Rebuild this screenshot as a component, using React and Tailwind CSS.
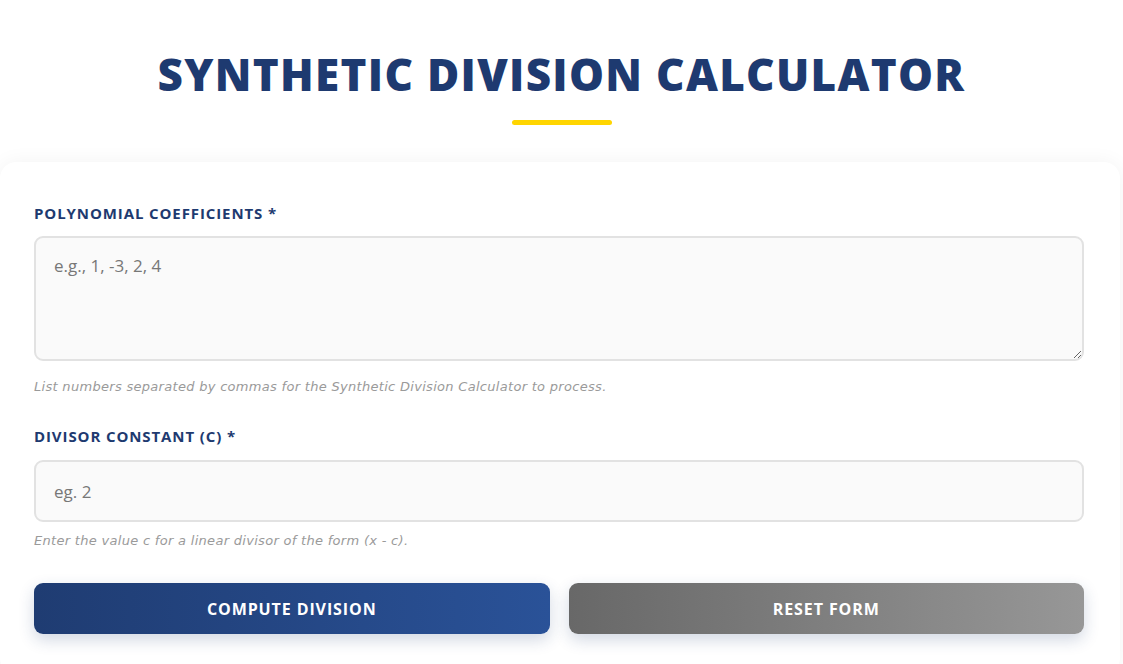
export default function App() {
  const font = { fontFamily: '"Open Sans", "Noto Sans", sans-serif' };
  const small = { fontFamily: '"DejaVu Sans", "Open Sans", sans-serif' };
  return (
    <div className="min-h-[664px] w-[1123px] bg-white overflow-hidden" style={font}>
      <div className="flex flex-col items-center pt-[44px]">
        <h1 className="text-[44px] leading-[60px] font-extrabold tracking-[1.3px] text-[#1e3a70] uppercase">
          Synthetic Division Calculator
        </h1>
        <div className="mt-[16px] h-[5px] w-[100px] rounded-full bg-[#ffd500]" />
      </div>
      <div className="mt-[37px] w-[1120px] rounded-[16px] bg-white pl-[34px] pr-[36px] pt-[40px] pb-[40px] shadow-[0_0_20px_rgba(0,0,0,0.05)]">
        <label className="block text-[15px] font-bold tracking-[0.9px] text-[#1e3a70] uppercase leading-[22px]">
          Polynomial Coefficients *
        </label>
        <textarea
          placeholder="e.g., 1, -3, 2, 4"
          className="mt-[12px] block h-[125px] w-full rounded-[9px] border-2 border-[#e2e2e2] bg-[#fafafa] px-[18px] pt-[15px] text-[17px] text-[#333] placeholder:text-[#777] outline-none"
          style={font}
        />
        <p className="mt-[17px] text-[13px] italic tracking-[0.3px] text-[#9a9a9a] leading-[18px]" style={small}>
          List numbers separated by commas for the Synthetic Division Calculator to process.
        </p>
        <label className="mt-[29px] block text-[15px] font-bold tracking-[0.9px] text-[#1e3a70] uppercase leading-[22px]">
          Divisor Constant (c) *
        </label>
        <input
          placeholder="eg. 2"
          className="mt-[13px] block h-[62px] w-full rounded-[9px] border-2 border-[#e2e2e2] bg-[#fafafa] px-[18px] text-[17px] text-[#333] placeholder:text-[#777] outline-none"
          style={font}
        />
        <p className="mt-[10px] text-[13px] italic tracking-[0.3px] text-[#9a9a9a] leading-[18px]" style={small}>
          Enter the value c for a linear divisor of the form (x - c).
        </p>
        <div className="mt-[33px] grid grid-cols-2 gap-[19px]">
          <button className="h-[51px] rounded-[9px] bg-gradient-to-r from-[#1f3c72] to-[#2a5298] text-[16px] font-bold tracking-[0.9px] text-white uppercase shadow-[0_6px_16px_rgba(30,60,114,0.2)]" style={font}>
            Compute Division
          </button>
          <button className="h-[51px] rounded-[9px] bg-gradient-to-r from-[#686868] to-[#979797] text-[16px] font-bold tracking-[0.9px] text-white uppercase shadow-[0_6px_16px_rgba(30,60,114,0.2)]" style={font}>
            Reset Form
          </button>
        </div>
      </div>
    </div>
  );
}
